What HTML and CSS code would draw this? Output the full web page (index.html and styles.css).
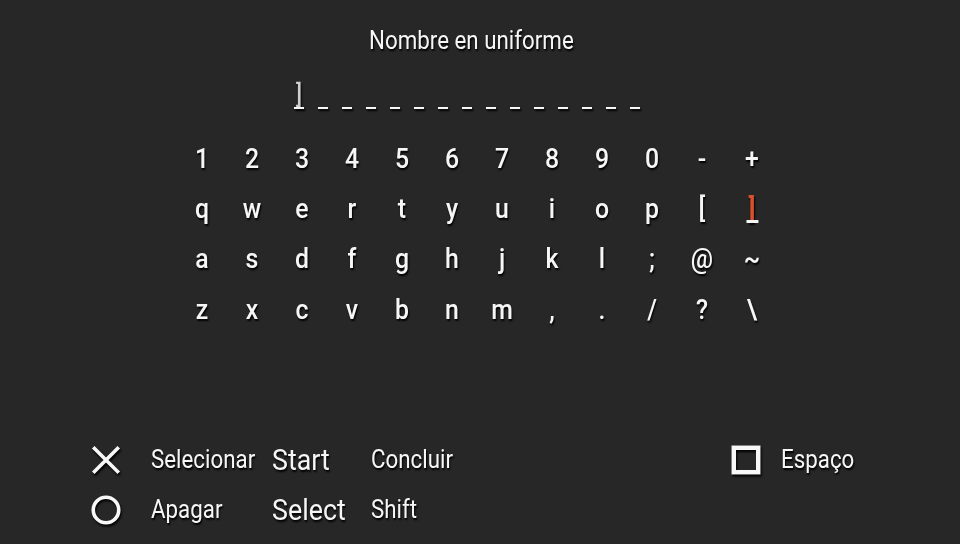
FILE: index.html
```html
<!DOCTYPE html>
<html lang="es">
<head>
<meta charset="utf-8">
<title>Nombre en uniforme</title>
<link rel="stylesheet" href="styles.css">
</head>
<body>
<main class="screen">
  <h1 class="title"><span class="cond">Nombre en uniforme</span></h1>
  <div class="slots">
    <span class="slot slot-active"><span class="cond">]</span></span>
    <span class="slot"></span><span class="slot"></span><span class="slot"></span><span class="slot"></span><span class="slot"></span><span class="slot"></span><span class="slot"></span><span class="slot"></span><span class="slot"></span><span class="slot"></span><span class="slot"></span><span class="slot"></span><span class="slot"></span><span class="slot"></span>
  </div>
  <div class="keys">
    <span class="key">1</span><span class="key">2</span><span class="key">3</span><span class="key">4</span><span class="key">5</span><span class="key">6</span><span class="key">7</span><span class="key">8</span><span class="key">9</span><span class="key">0</span><span class="key">-</span><span class="key">+</span>
    <span class="key">q</span><span class="key">w</span><span class="key">e</span><span class="key">r</span><span class="key">t</span><span class="key">y</span><span class="key">u</span><span class="key">i</span><span class="key">o</span><span class="key">p</span><span class="key">[</span><span class="key key-active">]</span>
    <span class="key">a</span><span class="key">s</span><span class="key">d</span><span class="key">f</span><span class="key">g</span><span class="key">h</span><span class="key">j</span><span class="key">k</span><span class="key">l</span><span class="key">;</span><span class="key">@</span><span class="key">~</span>
    <span class="key">z</span><span class="key">x</span><span class="key">c</span><span class="key">v</span><span class="key">b</span><span class="key">n</span><span class="key">m</span><span class="key">,</span><span class="key">.</span><span class="key">/</span><span class="key">?</span><span class="key">\</span>
  </div>
  <footer class="legend">
    <div class="legend-grid">
      <svg class="icon" viewBox="0 0 32 32"><path d="M4 4 L28 28 M28 4 L4 28"/></svg>
      <span class="label"><span class="cond">Selecionar</span></span>
      <span class="btn"><span class="cond cond-wide">Start</span></span>
      <span class="label label-tight"><span class="cond">Concluir</span></span>
      <svg class="icon" viewBox="0 0 32 32"><circle cx="16" cy="16" r="12"/></svg>
      <span class="label"><span class="cond">Apagar</span></span>
      <span class="btn"><span class="cond cond-wide">Select</span></span>
      <span class="label label-tight"><span class="cond">Shift</span></span>
    </div>
    <div class="legend-side">
      <svg class="icon icon-square" viewBox="0 0 32 32"><rect x="4.5" y="4.5" width="23" height="23"/></svg>
      <span class="label"><span class="cond">Espaço</span></span>
    </div>
  </footer>
</main>
</body>
</html>
```
FILE: styles.css
```css
* { box-sizing: border-box; }
html, body { margin: 0; height: 100%; }
body { background: #272727; color: #f6f6f6; font-family: Roboto, "Liberation Sans", sans-serif; overflow: hidden; }
.screen { width: 960px; height: 544px; display: flex; flex-direction: column; text-shadow: 1px 2px 2px #000; filter: blur(.3px); }
.cond { display: inline-block; transform: scaleX(.893); transform-origin: left center; white-space: nowrap; }
.cond-wide { transform: scaleX(.925); }
.title { margin: 0; padding: 25px 0 0 369px; height: 82px; font-size: 25px; font-weight: 400; line-height: 32px; }
.slots { display: flex; padding-left: 287px; height: 27px; }
.slot { position: relative; width: 24px; height: 27px; }
.slot::after { content: ""; position: absolute; left: 7px; bottom: 0; width: 10px; height: 2.5px; background: #f6f6f6; box-shadow: 1px 2px 2px #000; }
.slot-active { color: #cfcfcf; font-size: 25px; font-weight: 500; line-height: 26px; padding-left: 9px; }
.keys { margin: 25px 0 0 177px; display: grid; grid-template-columns: repeat(12, 50px); grid-template-rows: 50px 50px 51px 50px; font-size: 27px; font-weight: 500; }
.key { text-align: center; line-height: 50px; transform: scaleX(.92); }
.key-active { color: #d9502e; font-weight: 700; position: relative; }
.key-active::after { content: ""; position: absolute; left: 19px; top: 36px; width: 13px; height: 2.5px; background: #f6f6f6; }
.legend { margin-top: auto; padding: 0 0 9px 89px; display: flex; gap: 296px; align-items: flex-start; }
.legend-grid { display: grid; grid-template-columns: 34px 121px 99px 90px; grid-auto-rows: 50px; align-items: center; }
.icon { width: 34px; height: 34px; fill: none; stroke: #f8f8f8; stroke-width: 3.4; filter: drop-shadow(1px 2px 1px #000); }
.icon-square { stroke-width: 4.2; }
.label { font-size: 25px; line-height: 50px; padding-left: 28px; }
.label-tight { padding-left: 0; margin-left: 28px; }
.btn { font-size: 29px; line-height: 50px; margin-left: 28px; }
.legend-side { display: flex; align-items: center; height: 50px; }
.legend-side .label { padding-left: 18px; }
```
